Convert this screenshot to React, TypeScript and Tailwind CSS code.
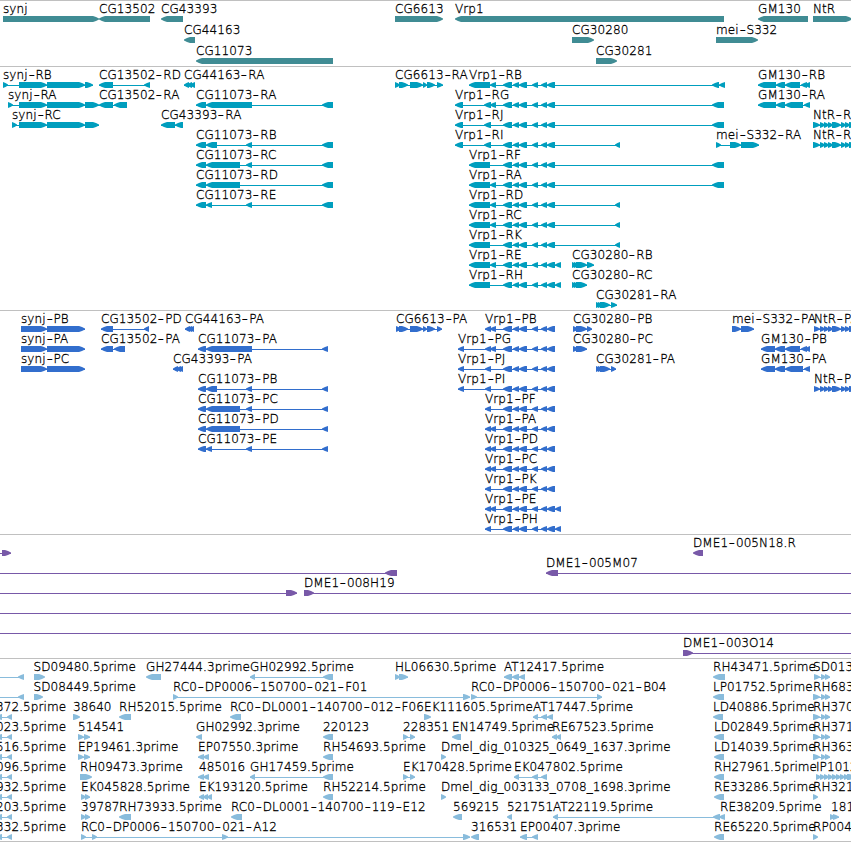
type Exon = [number, number]

type Feature = {
  name?: string
  at: number
  strand: '+' | '-'
  exons: Exon[]
  // full extent of the intron line when it runs past the exons
  span?: Exon
}

type Track = {
  id: string
  color: string
  tall?: boolean
  rows: Feature[][]
}

const fwd = (name: string, at: number, exons: Exon[], span?: Exon): Feature => ({ name, at, strand: '+', exons, span })
const rev = (name: string, at: number, exons: Exon[], span?: Exon): Feature => ({ name, at, strand: '-', exons, span })

const vrp: Exon[] = [[503, 512], [513, 519], [519, 527], [532, 538], [541, 547], [547, 555]]
const ntr: Exon[] = [[813, 820], [820, 825], [824, 829], [828, 833], [832, 841], [841, 846], [845, 850], [849, 856]]
const cg6613: Exon[] = [[399, 408], [410, 423], [423, 427], [427, 435]]
const multi: Exon[] = [[813, 820], [821, 826], [825, 830]]
const leftEst: Exon[] = [[-4, 2], [7, 12]]

const genes: Feature[][] = [
  [
    fwd('synj', 3, [[3, 99]]),
    rev('CG13502', 99, [[99, 150]]),
    rev('CG43393', 161, [[161, 183]]),
    fwd('CG6613', 395, [[395, 443]]),
    rev('Vrp1', 455, [[455, 724]]),
    rev('GM130', 758, [[758, 808]]),
    fwd('NtR', 813, [[813, 852]]),
  ],
  [
    rev('CG44163', 184, [[184, 195]]),
    fwd('CG30280', 572, [[572, 594]]),
    fwd('mei-S332', 716, [[716, 758]]),
  ],
  [
    rev('CG11073', 196, [[196, 333]]),
    fwd('CG30281', 596, [[596, 617]]),
  ],
]

const transcripts: Feature[][] = [
  [
    fwd('synj-RB', 3, [[3, 8], [19, 47], [47, 85], [85, 93]]),
    rev('CG13502-RD', 99, [[99, 113], [144, 150]]),
    rev('CG44163-RA', 184, [[184, 189], [187, 192], [190, 195]]),
    fwd('CG6613-RA', 395, [[395, 400], ...cg6613, [437, 443]]),
    rev('Vrp1-RB', 469, [[469, 490], [490, 496], ...vrp, [712, 719], [719, 725]]),
    rev('GM130-RB', 758, [[758, 776], [776, 785], [785, 800], [801, 807], [805, 810]]),
  ],
  [
    fwd('synj-RA', 8, [[8, 13], [19, 47], [47, 85], [85, 99]]),
    rev('CG13502-RA', 99, [[99, 113], [114, 127]]),
    rev('CG11073-RA', 196, [[196, 206], [206, 252], [322, 333]]),
    rev('Vrp1-RG', 455, [[455, 463], [484, 491], [490, 496], ...vrp, [712, 724]]),
    rev('GM130-RA', 758, [[758, 776], [776, 785], [785, 803], [804, 810]]),
  ],
  [
    fwd('synj-RC', 12, [[12, 17], [19, 47], [47, 85], [85, 99]]),
    rev('CG43393-RA', 161, [[161, 175], [175, 183]]),
    rev('Vrp1-RJ', 455, [[455, 463], [484, 491], ...vrp, [712, 724]]),
    fwd('NtR-RA', 813, ntr),
  ],
  [
    rev('CG11073-RB', 196, [[196, 206], [206, 217], [246, 252], [322, 333]]),
    rev('Vrp1-RI', 455, [[455, 463], [484, 491], ...vrp, [615, 620]]),
    fwd('mei-S332-RA', 716, [[716, 721], [730, 741], [741, 759]]),
    fwd('NtR-RB', 813, ntr),
  ],
  [
    rev('CG11073-RC', 196, [[196, 206], [206, 240], [246, 252], [322, 333]]),
    rev('Vrp1-RF', 469, [[469, 490], ...vrp, [712, 724]]),
  ],
  [
    rev('CG11073-RD', 196, [[196, 206], [206, 240], [322, 333]]),
    rev('Vrp1-RA', 469, [[469, 490], [490, 496], ...vrp, [712, 724]]),
  ],
  [
    rev('CG11073-RE', 196, [[196, 206], [206, 212], [246, 252], [322, 333]]),
    rev('Vrp1-RD', 469, [[469, 490], [490, 496], ...vrp, [615, 620]]),
  ],
  [rev('Vrp1-RC', 469, [[469, 490], [490, 496], ...vrp, [615, 620]])],
  [rev('Vrp1-RK', 469, [[469, 490], ...vrp, [615, 620]])],
  [
    rev('Vrp1-RE', 469, [[469, 490], [490, 496], ...vrp, [555, 561]]),
    fwd('CG30280-RB', 572, [[572, 577], [574, 579], [576, 587], [587, 594]]),
  ],
  [
    rev('Vrp1-RH', 469, [[469, 490], ...vrp, [555, 561]]),
    fwd('CG30280-RC', 572, [[572, 577], [574, 579], [576, 587]]),
  ],
  [fwd('CG30281-RA', 596, [[596, 601], [598, 603], [600, 610], [611, 617]])],
]

const proteins: Feature[][] = [
  [
    fwd('synj-PB', 21, [[21, 47], [47, 85]]),
    rev('CG13502-PD', 101, [[101, 113], [144, 149]]),
    rev('CG44163-PA', 185, [[185, 190], [187, 192], [189, 194]]),
    fwd('CG6613-PA', 396, [[396, 401], ...cg6613, [437, 442]]),
    rev('Vrp1-PB', 485, [[485, 491], [490, 496], ...vrp]),
    fwd('CG30280-PB', 573, [[573, 578], [576, 587], [587, 592]]),
    fwd('mei-S332-PA', 732, [[732, 741], [741, 754]]),
    fwd('NtR-PA', 814, [[814, 820], ...ntr.slice(1)]),
  ],
  [
    fwd('synj-PA', 21, [[21, 47], [47, 85]]),
    rev('CG13502-PA', 101, [[101, 113], [114, 125]]),
    rev('CG11073-PA', 198, [[198, 206], [206, 252], [322, 328]]),
    rev('Vrp1-PG', 458, [[458, 464], [485, 491], [490, 496], ...vrp]),
    fwd('CG30280-PC', 573, [[573, 578], [576, 587]]),
    rev('GM130-PB', 761, [[761, 775], [775, 785], [785, 800], [801, 807], [805, 810]]),
  ],
  [
    fwd('synj-PC', 21, [[21, 47], [47, 85]]),
    rev('CG43393-PA', 173, [[173, 178], [176, 181], [178, 183]]),
    rev('Vrp1-PJ', 458, [[458, 464], [485, 491], ...vrp]),
    fwd('CG30281-PA', 596, [[596, 601], [598, 603], [600, 610], [611, 616]]),
    rev('GM130-PA', 761, [[761, 775], [775, 785], [785, 803], [804, 810]]),
  ],
  [
    rev('CG11073-PB', 198, [[198, 206], [206, 217], [246, 252], [322, 328]]),
    rev('Vrp1-PI', 458, [[458, 464], [485, 491], ...vrp]),
    fwd('NtR-PB', 814, [[814, 820], ...ntr.slice(1)]),
  ],
  [
    rev('CG11073-PC', 198, [[198, 206], [206, 240], [246, 252], [322, 328]]),
    rev('Vrp1-PF', 485, [[485, 491], ...vrp]),
  ],
  [
    rev('CG11073-PD', 198, [[198, 206], [206, 240], [322, 328]]),
    rev('Vrp1-PA', 485, [[485, 491], [490, 496], ...vrp]),
  ],
  [
    rev('CG11073-PE', 198, [[198, 206], [206, 212], [246, 252], [322, 328]]),
    rev('Vrp1-PD', 485, [[485, 491], [490, 496], ...vrp]),
  ],
  [rev('Vrp1-PC', 485, [[485, 491], [490, 496], ...vrp])],
  [rev('Vrp1-PK', 485, [[485, 491], ...vrp])],
  [rev('Vrp1-PE', 485, [[485, 491], [490, 496], ...vrp, [555, 561]])],
  [rev('Vrp1-PH', 485, [[485, 491], ...vrp, [555, 561]])],
]

const clones: Feature[][] = [
  [fwd('', 0, [[2, 11]], [0, 11]), rev('DME1-005N18.R', 693, [[693, 703]])],
  [rev('', 0, [[385, 397]], [0, 397]), rev('DME1-005M07', 546, [[546, 558]], [546, 851])],
  [fwd('', 0, [[286, 297]], [0, 297]), fwd('DME1-008H19', 304, [[304, 314]], [304, 851])],
  [fwd('', 0, [], [0, 851])],
  [fwd('', 0, [], [0, 851])],
  [fwd('DME1-003O14', 683, [[683, 693]], [683, 851])],
]

const ests: Feature[][] = [
  [
    rev('', 0, [[18, 24]], [0, 24]),
    fwd('SD09480.5prime', 33.5, [[34, 45]]),
    rev('GH27444.3prime', 146, [[146, 161]]),
    rev('GH02992.5prime', 250, [[250, 255], [323, 333]]),
    fwd('HL06630.5prime', 395, [[395, 400], [399, 408]]),
    rev('AT12417.5prime', 504, [[504, 512], [512, 519], [519, 525]]),
    rev('RH43471.5prime', 713, [[713, 725]]),
    fwd('SD01389.5prime', 813, [[814, 820], [821, 826], [825, 830]]),
  ],
  [
    rev('', 0, [[18, 24]], [0, 24]),
    fwd('SD08449.5prime', 33.5, [[34, 43]]),
    fwd('RC0-DP0006-150700-021-F01', 173, [[173, 178], [463, 470]]),
    fwd('RC0-DP0006-150700-021-B04', 471, [[471, 477], [597, 602]]),
    rev('LP01752.5prime', 713, [[713, 724]]),
    fwd('RH68350.5prime', 813, multi),
  ],
  [
    rev('372.5prime', -4, leftEst),
    fwd('38640', 73, [[73, 80]]),
    rev('RH52015.5prime', 119, [[119, 131]]),
    rev('RC0-DL0001-140700-012-F06', 230, [[230, 241]]),
    fwd('EK111605.5prime', 424, [[424, 431]]),
    rev('AT17447.5prime', 533, [[533, 538], [541, 547], [547, 553]]),
    rev('LD40886.5prime', 713, [[713, 723]]),
    fwd('RH37044.5prime', 813, multi),
  ],
  [
    rev('023.5prime', -4, leftEst),
    fwd('514541', 78, [[78, 84], [84, 90]]),
    rev('GH02992.3prime', 196, [[196, 202]]),
    rev('220123', 323, [[323, 333]]),
    fwd('228351', 403, [[403, 408], [410, 415]]),
    rev('EN14749.5prime', 452, [[452, 461]]),
    rev('RE67523.5prime', 552, [[552, 557], [556, 561]]),
    rev('LD02849.5prime', 714, [[714, 724]]),
    fwd('RH37128.5prime', 813, multi),
  ],
  [
    rev('516.5prime', -4, leftEst),
    fwd('EP19461.3prime', 78, [[78, 84], [84, 90]]),
    rev('EP07550.3prime', 198, [[198, 204], [203, 209]]),
    rev('RH54693.5prime', 323, [[323, 333]]),
    fwd('Dmel_dig_010325_0649_1637.3prime', 441, [[441, 446]]),
    rev('LD14039.5prime', 714, [[714, 724]]),
    fwd('RH36312.5prime', 813, multi),
  ],
  [
    rev('096.5prime', -4, leftEst),
    fwd('RH09473.3prime', 80, [[80, 92]]),
    rev('485016', 199, [[198, 204], [203, 209]]),
    rev('GH17459.5prime', 250, [[250, 255], [323, 333]]),
    fwd('EK170428.5prime', 403, [[403, 408], [410, 415]]),
    rev('EK047802.5prime', 514, [[514, 519], [532, 538], [541, 547]]),
    rev('RH27961.5prime', 714, [[714, 724]]),
    fwd('IP10127.5prime', 816, [[816, 821], [820, 825], [824, 829], [828, 833], [832, 837], [836, 841], [840, 845], [844, 849], [847, 855]]),
  ],
  [
    rev('932.5prime', -4, leftEst),
    fwd('EK045828.5prime', 81, [[81, 86], [85, 90]]),
    rev('EK193120.5prime', 199, [[199, 204], [203, 208], [207, 212]]),
    rev('RH52214.5prime', 323, [[323, 333]]),
    fwd('Dmel_dig_003133_0708_1698.3prime', 441, [[441, 446]]),
    rev('RE33286.5prime', 714, [[714, 724]]),
    fwd('RH32190.5prime', 813, [[813, 818]]),
  ],
  [
    rev('203.5prime', -4, leftEst),
    fwd('39787', 81, [[81, 86], [85, 90]]),
    rev('RH73933.5prime', 119, [[119, 131]]),
    rev('RC0-DL0001-140700-119-E12', 231, [[231, 242]]),
    rev('569215', 453, [[453, 462]]),
    rev('521751', 507, [[507, 512]]),
    rev('AT22119.5prime', 553, [[553, 558], [713, 720]]),
    rev('RE38209.5prime', 720, [[719, 725]]),
    fwd('181704', 831, [[830, 835], [833, 839]]),
  ],
  [
    rev('332.5prime', -4, leftEst),
    fwd('RC0-DP0006-150700-021-A12', 81, [[81, 86], [92, 97], [222, 228], [463, 470]]),
    rev('316531', 471, [[471, 479]]),
    rev('EP00407.3prime', 520, [[520, 527], [532, 538]]),
    rev('RE65220.5prime', 714, [[714, 724]]),
    fwd('RP00417.5prime', 813, [[813, 818]]),
  ],
]

const tracks: Track[] = [
  { id: 'gene', color: 'text-[#408c94]', tall: true, rows: genes },
  { id: 'transcript', color: 'text-[#009ebe]', rows: transcripts },
  { id: 'cds', color: 'text-[#326ecd]', rows: proteins },
  { id: 'bac', color: 'text-[#7859a8]', rows: clones },
  { id: 'est', color: 'text-[#89bcdc]', rows: ests },
]

function exonPoints([a, b]: Exon, strand: '+' | '-') {
  const head = Math.min(b - a, 6)
  const bulge = 0.9
  const [back, tip, dir] = strand === '+' ? [a, b, -1] : [b, a, 1]
  const neck = tip + dir * head
  const mid = tip + (dir * head) / 2
  return `${back},0 ${neck},0 ${mid},${bulge} ${tip},2.5 ${tip},3.5 ${mid},${6 - bulge} ${neck},6 ${back},6`
}

function Glyph({ feature }: { feature: Feature }) {
  const { exons, strand, span } = feature
  const from = span ? span[0] : exons[0][0]
  const to = span ? span[1] : exons[exons.length - 1][1]
  return (
    <g>
      {(span || exons.length > 1) && <rect x={from} y={3} width={to - from} height={1} />}
      {exons.map((exon, i) => (
        <polygon key={i} points={exonPoints(exon, strand)} />
      ))}
    </g>
  )
}

function Label({ name, at }: { name: string; at: number }) {
  return (
    <span
      className="absolute top-0 text-xs leading-4 tracking-[0.08px] whitespace-nowrap text-black [-webkit-text-stroke:0.3px_black]"
      style={{ left: at }}
    >
      {name.split(/(-)/).map((part, i) =>
        part === '-' ? (
          <span key={i} className="inline-block w-[7.8px] text-center scale-x-140">-</span>
        ) : (
          part
        )
      )}
    </span>
  )
}

function Row({ features, tall }: { features: Feature[]; tall?: boolean }) {
  return (
    <div className={tall ? 'relative h-[21px]' : 'relative h-5'}>
      <svg className="absolute left-0 top-[15px] fill-current" width={851} height={6}>
        {features.map((f, i) => (
          <Glyph key={i} feature={f} />
        ))}
      </svg>
      {features.map((f) => (f.name ? <Label key={f.name} name={f.name} at={f.at} /> : null))}
    </div>
  )
}

export default function App() {
  return (
    <main className="w-[851px] h-[842px] overflow-hidden bg-white font-['DejaVu_Sans_Light','DejaVu_Sans',sans-serif] font-extralight">
      {tracks.map((track) => (
        <section
          key={track.id}
          className={`border-t border-[#c0c0c0] ${track.tall || track.id === 'est' ? 'pb-0.5' : 'pb-[3px]'} ${track.color}`}
        >
          {track.rows.map((features, i) => (
            <Row key={i} features={features} tall={track.tall} />
          ))}
        </section>
      ))}
      <div className="border-t border-[#c0c0c0]" />
    </main>
  )
}
